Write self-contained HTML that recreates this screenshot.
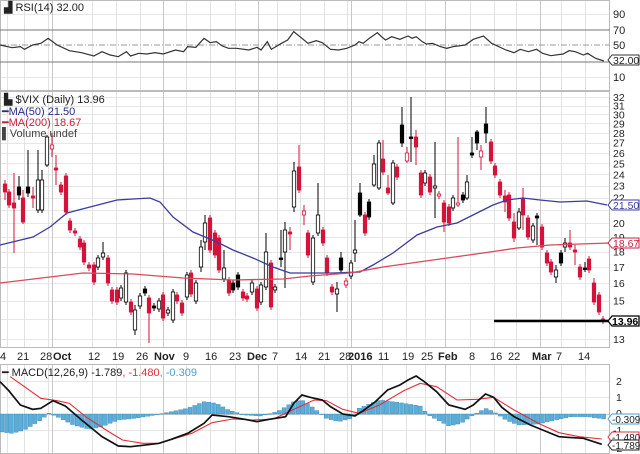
<!DOCTYPE html>
<html><head><meta charset="utf-8"><style>
html,body{margin:0;padding:0;background:#fff;width:640px;height:454px;overflow:hidden}
svg{display:block;font-family:"Liberation Sans",sans-serif}
</style></head><body>
<svg id="s" width="640" height="454" viewBox="0 0 640 454" xmlns="http://www.w3.org/2000/svg">
<g id="grid"></g>
<rect x="0.5" y="0.5" width="609" height="90" fill="none" stroke="#bbb"/>
<rect x="0.5" y="91.5" width="609" height="256" fill="none" stroke="#bbb"/>
<rect x="0.5" y="364.5" width="609" height="89" fill="none" stroke="#bbb"/>
<line x1="0" y1="30" x2="610" y2="30" stroke="#777" stroke-width="1"/>
<line x1="0" y1="62" x2="610" y2="62" stroke="#777" stroke-width="1"/>
<line x1="0" y1="45" x2="610" y2="45" stroke="#999" stroke-dasharray="6,2,1,2"/>
<polyline transform="scale(0.408,0.33333)" fill="none" stroke="#333" stroke-width="1.2" vector-effect="non-scaling-stroke" points="0,135 30,143 50,140 60,148 80,135 100,130 118,115 140,135 170,152 200,158 230,168 250,155 270,165 290,170 310,155 320,168 340,160 360,162 380,158 400,162 430,150 450,155 460,140 480,142 500,115 515,128 530,125 545,138 560,145 580,145 610,150 630,142 640,150 655,125 665,148 690,130 705,120 720,95 740,115 755,130 775,122 790,128 810,148 830,150 850,145 870,135 880,125 890,130 905,115 925,98 935,110 945,120 960,110 980,118 1000,108 1010,115 1020,110 1035,125 1045,132 1060,130 1080,140 1095,145 1110,140 1140,135 1160,118 1185,108 1205,130 1240,150 1260,158 1275,148 1295,155 1315,148 1330,160 1350,167 1380,162 1395,152 1410,155 1430,165 1440,160 1460,175 1480,183"/>
<g font-size="11" fill="#222">
<text x="4" y="11">▟ RSI(14) 32.00</text>
<text x="613" y="18">90</text><text x="613" y="34">70</text><text x="613" y="49">50</text><text x="613" y="81">10</text>
</g>
<path d="M608 60 l4 -5 h27 v10 h-27z" fill="#fff" stroke="#333"/>
<text x="613" y="64" font-size="10.5" fill="#222">32.00</text>

<g id="candles"></g>
<polyline fill="none" stroke="#3b3b9c" stroke-width="1.3" points="0,245 33,237 50,227 67,213 90,207 117,200 150,198 160,202 173,217 193,232 217,242 233,250 253,258 273,267 290,273 333,273 360,272 373,265 393,253 417,235 437,227 457,223 473,215 493,205 507,200 523,198 540,200 560,202 587,201 607,205"/>
<polyline fill="none" stroke="#d84a5c" stroke-width="1.3" points="0,283 50,277 83,273 133,274 183,278 233,280 283,279 310,276 350,273 383,267 433,260 483,253 517,248 550,245 610,243"/>
<line x1="494" y1="321" x2="608" y2="321" stroke="#000" stroke-width="2.5"/>
<g font-size="11">
<text x="4" y="103" fill="#222">▙ $VIX (Daily) 13.96</text>
<text x="2" y="115" fill="#2a2a8a">━MA(50) 21.50</text>
<text x="2" y="126" fill="#c8203c">━MA(200) 18.67</text>
<text x="2" y="137" fill="#444">▌Volume undef</text>
</g>
<g font-size="10.5" fill="#222" id="plabels"></g>
<path d="M608 205 l4 -5 h27 v10 h-27z" fill="#fff" stroke="#3b3b9c"/>
<text x="613" y="209" font-size="10.5" fill="#3b3b9c">21.50</text>
<path d="M608 243 l4 -5 h27 v10 h-27z" fill="#fff" stroke="#c8203c"/>
<text x="613" y="247" font-size="10.5" fill="#c8203c">18.67</text>
<path d="M608 321 l4 -5 h27 v10 h-27z" fill="#fff" stroke="#000" stroke-width="1.3"/>
<text x="612" y="325" font-size="10.5" font-weight="bold" fill="#000">13.96</text>

<g font-size="11" fill="#222" id="dates"></g>

<g id="hist"></g>
<polyline transform="translate(0,320) scale(0.408,0.33333)" fill="none" stroke="#e0303a" stroke-width="1.1" vector-effect="non-scaling-stroke" points="25,170 60,200 100,235 140,242 170,250 210,290 260,330 300,360 350,370 390,370 430,355 470,340 520,308 570,297 620,300 670,297 720,268 770,240 800,242 840,268 880,280 930,255 990,212 1030,190 1070,200 1120,240 1170,238 1210,232 1260,270 1320,310 1370,338 1420,350 1475,357"/>
<polyline transform="translate(0,320) scale(0.408,0.33333)" fill="none" stroke="#111" stroke-width="1.7" vector-effect="non-scaling-stroke" points="0,185 20,210 50,255 80,268 100,265 130,242 160,258 200,300 250,350 290,378 320,380 350,376 390,370 420,358 460,340 500,310 520,285 560,290 600,298 630,305 660,298 700,290 720,250 740,225 760,232 790,240 810,260 840,282 870,288 890,272 920,245 950,210 980,195 1000,180 1020,168 1040,185 1070,215 1100,255 1140,268 1160,255 1190,222 1210,232 1230,262 1260,290 1300,315 1330,330 1370,350 1390,352 1430,355 1475,373"/>
<g font-size="11">
<text x="2" y="376" fill="#222">━ MACD(12,26,9) -1.789<tspan fill="#e0303a">, -1.480</tspan><tspan fill="#4a9fd0">, -0.309</tspan></text>
</g>
<g font-size="10.5" fill="#222">
<text x="616" y="385">2</text><text x="616" y="401">1</text><text x="616" y="417">0</text><text x="613" y="434">-1</text><text x="613" y="452">-2</text>
</g>
<path d="M608 419 l4 -5 h27 v10 h-27z" fill="#fff" stroke="#4a9fd0"/>
<text x="612" y="423" font-size="10" fill="#222">-0.309</text>
<path d="M608 437 l4 -5 h27 v10 h-27z" fill="#fff" stroke="#e0303a"/>
<text x="612" y="441" font-size="10" fill="#222">-1.480</text>
<path d="M608 445 l4 -5 h27 v10 h-27z" fill="#fff" stroke="#222"/>
<text x="612" y="449" font-size="10" fill="#222">-1.789</text>
</svg>
<script>
var NS="http://www.w3.org/2000/svg";
function el(p,t,a){var e=document.createElementNS(NS,t);for(var k in a)e.setAttribute(k,a[k]);p.appendChild(e);return e;}
function py(p){return 97+268.6*(Math.log(32)-Math.log(p));}
var g=document.getElementById('grid');
for(var p=13;p<=32;p++){var y=Math.round(py(p))+0.5;el(g,'line',{x1:0,x2:610,y1:y,y2:y,stroke:'#e6e6e6'});}
[14,77].forEach(function(y){el(g,'line',{x1:0,x2:610,y1:y+.5,y2:y+.5,stroke:'#e6e6e6'});});
[381,397,430].forEach(function(y){el(g,'line',{x1:0,x2:610,y1:y+.5,y2:y+.5,stroke:'#e6e6e6'});});
el(g,'line',{x1:0,x2:610,y1:414.5,y2:414.5,stroke:'#ccc'});
var vx=[7,24,48,52,92,116,140,163,186,210,235,258,277,300,324,347,351,382,406,425,445,470,494,516,540,561,585];
var months=[52,163,258,351,445,540];
vx.forEach(function(x){var c=months.indexOf(x)>=0?'#c8c8c8':'#e2e2e2';
 [[1,90],[92,347],[365,454]].forEach(function(r){el(g,'line',{x1:x+.5,x2:x+.5,y1:r[0],y2:r[1],stroke:c});});});
var pl=document.getElementById('plabels');
for(var p=13;p<=32;p++){if(p==14||p==21)continue;var t=el(pl,'text',{x:613,y:py(p)+4});t.textContent=p;}
var d=[[0,'4'],[17,'21'],[40,'28'],[53,'Oct',1],[88,'12'],[112,'19'],[136,'26'],[154,'Nov',1],[183,'9'],[205,'16'],[229,'23'],[247,'Dec',1],[272,'7'],[295,'14'],[318,'21'],[339,'28'],[348,'2016',1],[378,'11'],[402,'19'],[421,'25'],[438,'Feb',1],[469,'8'],[490,'16'],[508,'22'],[532,'Mar',1],[556,'7'],[578,'14']];
var dg=document.getElementById('dates');
d.forEach(function(a){var t=el(dg,'text',{x:a[0],y:360});if(a[2])t.setAttribute('font-weight','bold');t.textContent=a[1];});
var C=[[5,184,192,'r',180,200],[9,192,205,'r'],[14,203,208,'r',173,253],[19,187,195,'b',176,200],[23,198,222,'r',190,224],[28,187,193,'b',150,197],[33,196,198,'r',187,208],[38,180,210,'w',150,213],[42,180,210,'w',170,213],[47,137,165,'w',135,167],[52,145,149,'h',133,157],[56,168,170,'r',155,185],[61,185,192,'r'],[66,176,212,'r'],[70,221,230,'r'],[75,231,233,'r'],[80,239,247,'r'],[84,243,262,'r'],[89,265,268,'r'],[94,265,282,'r'],[98,258,267,'w'],[103,253,257,'w',242,260],[108,258,283,'r'],[112,290,301,'r'],[117,290,302,'r'],[121,288,298,'w'],[126,273,302,'w'],[131,302,312,'r'],[135,310,330,'w',305,335],[140,296,306,'w'],[145,289,293,'b'],[149,298,313,'r',295,343],[154,306,308,'b'],[159,301,309,'w'],[163,295,318,'r'],[168,310,313,'w'],[173,292,320,'w'],[177,295,301,'r'],[182,303,313,'r'],[187,275,297,'w'],[191,273,294,'r'],[196,283,301,'w'],[201,247,267,'w',240,272],[205,223,242,'w',215,250],[210,218,250,'r'],[215,233,255,'r'],[219,238,270,'r'],[224,268,279,'w',250,282],[229,280,293,'r'],[233,283,290,'b'],[238,275,287,'b'],[243,292,298,'r'],[247,296,299,'r'],[252,283,292,'w'],[257,289,308,'r'],[261,285,302,'w'],[266,252,287,'w',233,290],[271,263,307,'r'],[275,287,290,'w'],[281,258,259,'b',230,267],[285,230,252,'w',222,288],[290,232,234,'r',227,250],[294,171,207,'w',162,212],[299,167,190,'r',145,193],[304,211,215,'h',205,225],[308,233,255,'r'],[313,238,282,'w'],[318,215,233,'w',183,236],[323,230,243,'r'],[327,258,273,'r'],[332,287,292,'r'],[337,289,294,'w',282,312],[341,258,270,'b',252,272],[346,281,285,'h'],[351,263,276,'w'],[355,250,253,'w',220,262],[360,193,215,'b',183,217],[365,215,233,'r'],[369,202,217,'b'],[374,164,185,'w',155,187],[379,143,188,'w',140,190],[383,159,172,'r',140,175],[388,188,193,'r',175,195],[393,163,203,'w',160,205],[397,167,177,'r'],[402,125,143,'b',107,147],[407,153,161,'h',147,163],[411,137,138,'b',97,162],[416,137,147,'r',130,165],[421,173,195,'r'],[425,173,183,'w'],[430,177,192,'r'],[435,186,188,'w',142,218],[439,194,196,'h'],[444,203,222,'r',200,232],[449,207,223,'r'],[453,198,208,'w'],[458,203,205,'h',137,207],[463,195,200,'b'],[467,182,198,'w',175,200],[472,153,155,'b',137,158],[477,132,143,'b',130,150],[481,151,157,'h',145,170],[486,124,133,'b',107,143],[491,142,161,'r'],[495,166,175,'r'],[500,182,195,'r'],[505,196,202,'r',190,212],[509,195,218,'r'],[514,222,238,'r',213,242],[519,212,228,'w',208,230],[523,199,215,'r',188,230],[528,218,237,'r'],[533,226,240,'w'],[537,216,218,'b',213,245],[542,227,247,'r'],[547,253,263,'r'],[551,262,272,'r'],[556,270,277,'w',265,283],[561,253,263,'b'],[565,243,247,'w',238,252],[570,243,247,'r',230,250],[575,250,252,'r',245,265],[580,267,277,'r'],[585,268,269,'b',262,272],[589,259,270,'r'],[594,283,302,'r',278,305],[599,295,312,'r'],[603,319,321,'r',316,324]];
var cg=document.getElementById('candles');
C.forEach(function(c){var x=c[0],t=c[1],b=c[2],ty=c[3];var wt=c[4]||t-3,wb=c[5]||b+3;
 var col=(ty=='r'||ty=='h')?'#d4123a':'#000';
 el(cg,'line',{x1:x,x2:x,y1:wt,y2:wb,stroke:col,'stroke-width':1});
 var h=Math.max(b-t,1.5);
 var fill=ty=='r'?'#d4123a':ty=='b'?'#000':'#fff';
 el(cg,'rect',{x:x-1.7,y:t,width:3.4,height:h,fill:fill,stroke:col,'stroke-width':0.8});});
var hk=[[0,335],[30,340],[60,330],[100,300],[120,280],[140,290],[180,315],[220,328],[250,320],[290,300],[330,295],[380,285],[420,275],[460,265],[500,245],[530,250],[560,270],[600,285],[640,288],[680,275],[720,245],[740,240],[770,265],[800,295],[830,305],[860,295],[880,265],[900,255],[930,240],[980,248],[1030,258],[1050,285],[1080,305],[1100,318],[1130,310],[1160,285],[1190,265],[1210,275],[1240,300],[1270,315],[1320,312],[1360,300],[1400,290],[1440,290],[1480,297]];
function hv(x){for(var i=0;i<hk.length-1;i++){if(x>=hk[i][0]&&x<=hk[i+1][0]){var f=(x-hk[i][0])/(hk[i+1][0]-hk[i][0]);return hk[i][1]+f*(hk[i+1][1]-hk[i][1]);}}return 297;}
var hg=document.getElementById('hist');
for(var x=2;x<606;x+=4.7){var v=320+hv(x/0.408)/3,z=414;var y=Math.min(v,z),h=Math.abs(v-z);
 el(hg,'rect',{x:x-2,y:y,width:4,height:Math.max(h,0.5),fill:'#5aaed8',stroke:'#3a86b8','stroke-width':0.4});}
</script>
</body></html>
